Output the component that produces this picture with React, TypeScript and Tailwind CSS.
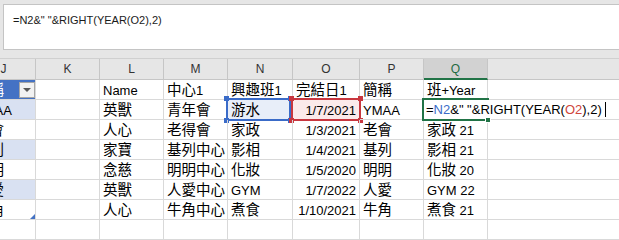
import React from "react";

const CJK = /([\u2E80-\u9FFF\uF900-\uFAFF\uFF00-\uFFEF]+)/;

// CJK runs get a slightly larger size so they line up with the Latin text
const Txt = ({ s }: { s: string }) => (
  <span>
    {s.split(CJK).map((p, i) =>
      CJK.test(p) ? (
        <span key={i} className="text-[14.5px]">
          {p}
        </span>
      ) : (
        <React.Fragment key={i}>{p}</React.Fragment>
      )
    )}
  </span>
);

// R is wide, its letter sits past the right edge of the window
const columns = [
  { key: "J", w: "w-[64px]" },
  { key: "K", w: "w-[64px]" },
  { key: "L", w: "w-[64px]" },
  { key: "M", w: "w-[64px]" },
  { key: "N", w: "w-[65px]" },
  { key: "O", w: "w-[67px]" },
  { key: "P", w: "w-[64px]" },
  { key: "Q", w: "w-[64px]" },
  { key: "", w: "w-[300px]" },
];

type Row = { j: string; l: string; m: string; n: string; o: string; p: string; q: string };

const rows: Row[] = [
  { j: "簡稱", l: "Name", m: "中心1", n: "興趣班1", o: "完結日1", p: "簡稱", q: "班+Year" },
  { j: "YMAA", l: "英獸", m: "青年會", n: "游水", o: "1/7/2021", p: "YMAA", q: "" },
  { j: "老會", l: "人心", m: "老得會", n: "家政", o: "1/3/2021", p: "老會", q: "家政 21" },
  { j: "基列", l: "家寶", m: "基列中心", n: "影相", o: "1/4/2021", p: "基列", q: "影相 21" },
  { j: "明明", l: "念慈", m: "明明中心", n: "化妝", o: "1/5/2020", p: "明明", q: "化妝 20" },
  { j: "人愛", l: "英獸", m: "人愛中心", n: "GYM", o: "1/7/2022", p: "人愛", q: "GYM 22" },
  { j: "牛角", l: "人心", m: "牛角中心", n: "煮食", o: "1/10/2021", p: "牛角", q: "煮食 21" },
];

const cellBase =
  "relative h-full shrink-0 border-r border-b border-[#d9d9d9] flex items-end pb-[2px] leading-none overflow-hidden whitespace-nowrap";

const RefBox = ({ color, fill, w }: { color: string; fill: string; w: string }) => {
  const sq = `absolute w-[5px] h-[5px] ${fill}`;
  return (
    <div className={`absolute -left-[2px] -top-[2px] h-[23px] ${w} border-2 ${color}`}>
      <div className={`${sq} -left-[4px] -top-[4px]`} />
      <div className={`${sq} -right-[4px] -top-[4px]`} />
      <div className={`${sq} -left-[4px] -bottom-[4px]`} />
      <div className={`${sq} -right-[4px] -bottom-[4px]`} />
    </div>
  );
};

const JCell = ({ text, idx }: { text: string; idx: number }) => {
  const header = idx === 0;
  const band = idx % 2 === 1 ? "bg-[#d9e1f2]" : "bg-white";
  return (
    <div
      className={`${cellBase} w-[64px] pl-[3px] border-[#8ea9db] ${
        header ? "bg-[#4472c4] text-white" : band
      }`}
    >
      <Txt s={text} />
      {header && (
        <div className="absolute right-0 top-[2px] w-[16px] h-[16px] bg-[#f2f2f2] border border-[#a6a6a6] flex items-center justify-center">
          <div className="w-0 h-0 border-l-[4px] border-r-[4px] border-t-[4px] border-l-transparent border-r-transparent border-t-[#595959]" />
        </div>
      )}
      {idx === 6 && (
        <svg className="absolute right-0 bottom-0" width="5" height="5" viewBox="0 0 5 5">
          <polygon points="5,0 5,5 0,5" fill="#4472c4" />
        </svg>
      )}
    </div>
  );
};

export default function App() {
  return (
    <div className="w-[619px] h-[240px] overflow-hidden bg-white font-['Liberation_Sans','Noto_Sans_CJK_TC',sans-serif] text-[13px] text-black">
      {/* formula bar */}
      <div className="h-[58px] bg-[#e6e6e6] pt-[4px] pl-[3px]">
        <div className="h-[46px] w-[700px] bg-white border border-[#c4c4c4] pl-[9px] pt-[8px] text-[11px] leading-[14px] text-[#1a1a1a]">
          {'=N2&" "&RIGHT(YEAR(O2),2)'}
        </div>
      </div>

      <div className="-ml-[28px] w-[1000px]">
        {/* column letters */}
        <div className="flex h-[22px] border-t border-[#d0d0d0]">
          {columns.map((c, ci) =>
            c.key === "Q" ? (
              <div
                key={ci}
                className={`${c.w} shrink-0 h-full bg-[#d2d2d2] border-r border-[#c6c6c6] border-b-2 border-b-[#217346] flex items-center justify-center text-[12px] text-[#1e6b41]`}
              >
                {c.key}
              </div>
            ) : (
              <div
                key={ci}
                className={`${c.w} shrink-0 h-full bg-[#e6e6e6] border-r border-b border-[#c6c6c6] flex items-center justify-center text-[12px] text-[#333]`}
              >
                {c.key}
              </div>
            )
          )}
        </div>

        {rows.map((r, i) => (
          <div key={i} className="flex h-[20px]">
            <JCell text={r.j} idx={i} />
            <div className={`${cellBase} w-[64px]`} />
            <div className={`${cellBase} w-[64px] pl-[3px]`}>
              <Txt s={r.l} />
            </div>
            <div className={`${cellBase} w-[64px] pl-[3px]`}>
              <Txt s={r.m} />
            </div>
            <div
              className={`${cellBase} w-[65px] pl-[3px] ${i === 1 ? "bg-[#e8eef9] overflow-visible" : ""}`}
            >
              <Txt s={r.n} />
              {i === 1 && <RefBox color="border-[#3a6bc8]" fill="bg-[#3a6bc8]" w="w-[65px]" />}
            </div>
            <div
              className={`${cellBase} w-[67px] pr-[3px] ${
                i === 0 ? "pl-[3px]" : "justify-end"
              } ${i === 1 ? "bg-[#fbeaea] overflow-visible" : ""}`}
            >
              <Txt s={r.o} />
              {i === 1 && <RefBox color="border-[#c8373f]" fill="bg-[#c8373f]" w="w-[70px]" />}
            </div>
            <div className={`${cellBase} w-[64px] pl-[3px]`}>
              <Txt s={r.p} />
            </div>
            {i === 1 ? (
              <div className="relative z-10 h-full w-[64px] shrink-0 border-b border-[#d9d9d9] flex items-end pb-[2px] pl-[2px] leading-none whitespace-nowrap bg-white">
                <span>
                  =<span className="text-[#3a6bc8]">N2</span>
                  {'&" "&RIGHT(YEAR('}
                  <span className="text-[#d0453c]">O2</span>
                  ),2)
                  <span className="inline-block w-[1px] h-[15px] bg-black ml-[3px] align-[-3px]" />
                </span>
                <div className="absolute -left-[2px] -top-[2px] w-[67px] h-[23px] border-t-2 border-l-2 border-b-2 border-[#217346]" />
                <div className="absolute left-[61px] top-[17px] w-[6px] h-[6px] bg-[#217346] border border-white" />
              </div>
            ) : (
              <div className={`${cellBase} w-[64px] pl-[3px]`}>
                <Txt s={r.q} />
              </div>
            )}
            <div className={`${cellBase} w-[300px] border-r-0`} />
          </div>
        ))}

        {/* empty row */}
        <div className="flex h-[20px]">
          {columns.map((c, ci) => (
            <div key={ci} className={`${cellBase} ${c.w}`} />
          ))}
        </div>
      </div>
    </div>
  );
}
